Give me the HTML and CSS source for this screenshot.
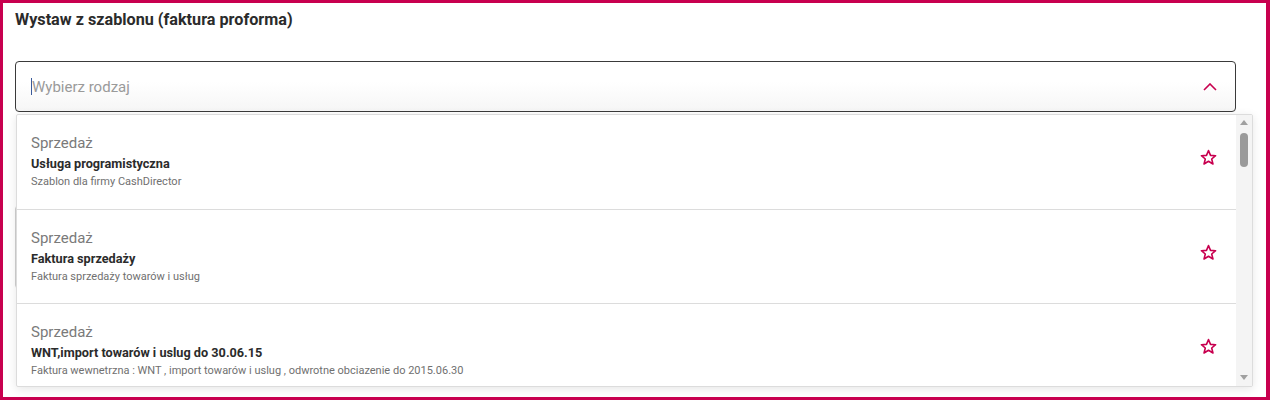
FILE: index.html
```html
<!DOCTYPE html>
<html lang="pl">
<head>
<meta charset="utf-8">
<title>Wystaw z szablonu</title>
<link rel="stylesheet" href="styles.css">
</head>
<body>
<div class="frame">
  <h1 class="title">Wystaw z szablonu (faktura proforma)</h1>
  <div class="field">
    <div class="select">
      <span class="caret"></span>
      <span class="placeholder">Wybierz rodzaj</span>
      <svg class="chevron" width="14" height="8" viewBox="0 0 14 8"><polyline points="1,7 7,1 13,7" fill="none" stroke="#c8004f" stroke-width="1.6"/></svg>
    </div>
    <div class="dropdown">
      <ul class="list">
        <li class="item">
          <div class="texts">
            <div class="cat">Sprzedaż</div>
            <div class="name">Usługa programistyczna</div>
            <div class="desc">Szablon dla firmy CashDirector</div>
          </div>
          <svg class="star" width="17" height="17" viewBox="0 0 16 16"><polygon points="8,1.5 9.9,6 14.7,6.3 11,9.4 12.2,14.1 8,11.5 3.8,14.1 5,9.4 1.3,6.3 6.1,6" fill="none" stroke="#c8004f" stroke-width="1.5" stroke-linejoin="round"/></svg>
        </li>
        <li class="item">
          <div class="texts">
            <div class="cat">Sprzedaż</div>
            <div class="name">Faktura sprzedaży</div>
            <div class="desc">Faktura sprzedaży towarów i usług</div>
          </div>
          <svg class="star" width="17" height="17" viewBox="0 0 16 16"><polygon points="8,1.5 9.9,6 14.7,6.3 11,9.4 12.2,14.1 8,11.5 3.8,14.1 5,9.4 1.3,6.3 6.1,6" fill="none" stroke="#c8004f" stroke-width="1.5" stroke-linejoin="round"/></svg>
        </li>
        <li class="item">
          <div class="texts">
            <div class="cat">Sprzedaż</div>
            <div class="name">WNT,import towarów i uslug do 30.06.15</div>
            <div class="desc">Faktura wewnetrzna : WNT , import towarów i uslug , odwrotne obciazenie do 2015.06.30</div>
          </div>
          <svg class="star" width="17" height="17" viewBox="0 0 16 16"><polygon points="8,1.5 9.9,6 14.7,6.3 11,9.4 12.2,14.1 8,11.5 3.8,14.1 5,9.4 1.3,6.3 6.1,6" fill="none" stroke="#c8004f" stroke-width="1.5" stroke-linejoin="round"/></svg>
        </li>
      </ul>
      <div class="scrollbar">
        <span class="arrow up"></span>
        <span class="thumb"></span>
        <span class="spacer"></span>
        <span class="arrow down"></span>
      </div>
    </div>
  </div>
  <div class="under"></div>
</div>
</body>
</html>
```
FILE: styles.css
```css
html, body {
  margin: 0;
  padding: 0;
  background: #fff;
}
body {
  font-family: Roboto, "Liberation Sans", Arial, sans-serif;
  color: #333;
}
.frame {
  box-sizing: border-box;
  width: 1270px;
  height: 400px;
  border: 3px solid #c8004f;
  border-right-width: 4px;
  padding: 7px 0 0 12px;
  overflow: hidden;
}
.title {
  margin: 0;
  font-size: 16.2px;
  line-height: 20px;
  font-weight: 700;
  color: #2b2b2b;
}
.field {
  position: relative;
  margin-top: 31px;
  width: 1221px;
}
.select {
  box-sizing: border-box;
  height: 51px;
  border: 1px solid #3a3a3a;
  border-radius: 4px;
  background: linear-gradient(#fff 40%, #f6f6f6);
  display: flex;
  align-items: center;
  padding: 0 18px 0 15px;
}
.caret {
  width: 1px;
  height: 17px;
  background: #3a5a9a;
}
.placeholder {
  flex: 1;
  font-size: 15px;
  color: #9a9a9a;
  margin-top: 1px;
}
.chevron {
  display: block;
}
.dropdown {
  position: absolute;
  top: 53px;
  left: 1px;
  width: 1237px;
  height: 273px;
  box-sizing: border-box;
  border: 1px solid #dcdcdc;
  border-radius: 2px;
  background: #fff;
  box-shadow: 0 2px 10px rgba(0,0,0,0.10);
  display: flex;
  overflow: hidden;
  z-index: 2;
}
.list {
  list-style: none;
  margin: 0;
  padding: 0;
  flex: 1;
}
.item {
  display: flex;
  align-items: center;
  padding: 19px 19px 20px 14px;
  border-bottom: 1px solid #dcdcdc;
}
.item:nth-child(n+2) {
  padding-bottom: 19px;
}
.texts {
  flex: 1;
}
.cat {
  font-size: 15px;
  line-height: 18px;
  color: #7a7a7a;
}
.name {
  margin-top: 4px;
  font-size: 12.7px;
  line-height: 16px;
  font-weight: 700;
  color: #2b2b2b;
}
.desc {
  margin-top: 3px;
  font-size: 11px;
  line-height: 14px;
  color: #707070;
}
.star {
  display: block;
  margin-top: -8px;
}
.scrollbar {
  width: 16px;
  background: #f4f4f4;
  display: flex;
  flex-direction: column;
  align-items: center;
  padding: 5px 0 6px;
  box-sizing: border-box;
}
.arrow {
  width: 0;
  height: 0;
  border-left: 4px solid transparent;
  border-right: 4px solid transparent;
}
.arrow.up {
  border-bottom: 5px solid #a0a0a0;
}
.arrow.down {
  border-top: 5px solid #a0a0a0;
}
.thumb {
  width: 8px;
  height: 34px;
  margin-top: 8px;
  border-radius: 4px;
  background: #9a9a9a;
}
.spacer {
  flex: 1;
}
.under {
  box-sizing: border-box;
  width: 1221px;
  height: 84px;
  margin-top: 93px;
  border: 1px solid #cfcfcf;
  border-radius: 4px;
}
```
